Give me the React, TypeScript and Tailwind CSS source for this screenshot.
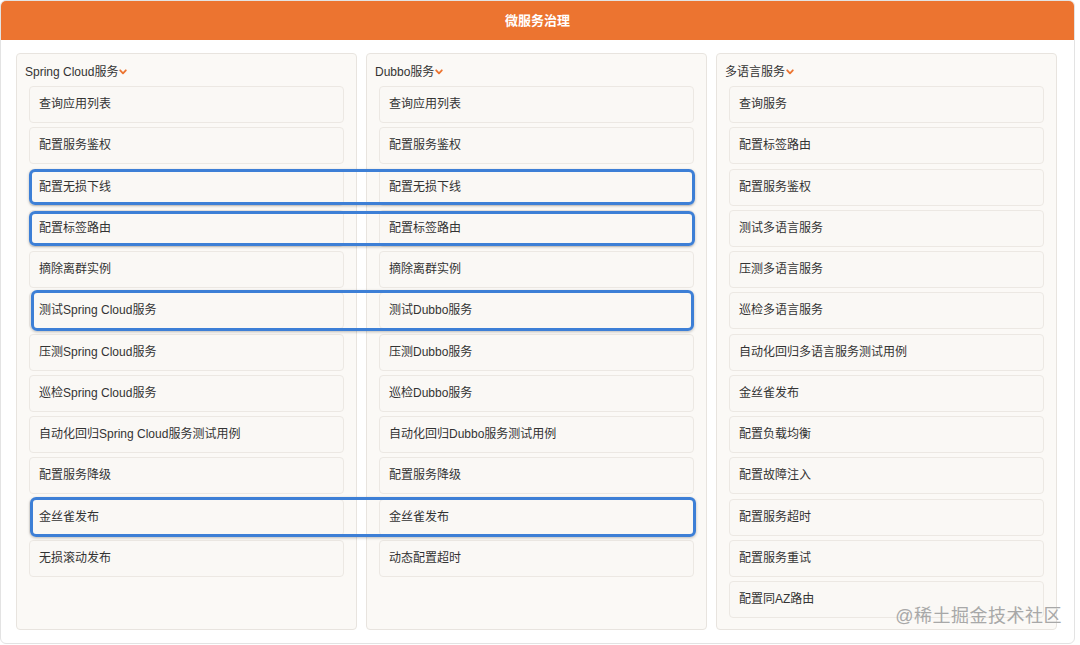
import React from "react";

const FONT = {
  fontFamily: '"Liberation Sans", "Noto Sans CJK SC", sans-serif',
};

const cols: { title: string; items: string[] }[] = [
  {
    title: "Spring Cloud服务",
    items: [
      "查询应用列表",
      "配置服务鉴权",
      "配置无损下线",
      "配置标签路由",
      "摘除离群实例",
      "测试Spring Cloud服务",
      "压测Spring Cloud服务",
      "巡检Spring Cloud服务",
      "自动化回归Spring Cloud服务测试用例",
      "配置服务降级",
      "金丝雀发布",
      "无损滚动发布",
    ],
  },
  {
    title: "Dubbo服务",
    items: [
      "查询应用列表",
      "配置服务鉴权",
      "配置无损下线",
      "配置标签路由",
      "摘除离群实例",
      "测试Dubbo服务",
      "压测Dubbo服务",
      "巡检Dubbo服务",
      "自动化回归Dubbo服务测试用例",
      "配置服务降级",
      "金丝雀发布",
      "动态配置超时",
    ],
  },
  {
    title: "多语言服务",
    items: [
      "查询服务",
      "配置标签路由",
      "配置服务鉴权",
      "测试多语言服务",
      "压测多语言服务",
      "巡检多语言服务",
      "自动化回归多语言服务测试用例",
      "金丝雀发布",
      "配置负载均衡",
      "配置故障注入",
      "配置服务超时",
      "配置服务重试",
      "配置同AZ路由",
    ],
  },
];

function Chevron() {
  return (
    <svg width="8" height="6" viewBox="0 0 8 6" className="ml-[1px]">
      <path
        d="M1.2 1.3 L4 4.3 L6.8 1.3"
        fill="none"
        stroke="#ec7430"
        strokeWidth="1.8"
        strokeLinecap="round"
        strokeLinejoin="round"
      />
    </svg>
  );
}

function Panel({ title, items }: { title: string; items: string[] }) {
  return (
    <div className="w-[341px] h-[577px] border border-[#e8e4df] rounded-[4px] bg-[#fbf9f6] pt-[9px]">
      <div className="flex items-center h-[18px] pl-[8px] text-[12px] text-[#333]">
        <span>{title}</span>
        <Chevron />
      </div>
      <div className="mt-[5px] flex flex-col gap-[4.25px] px-[12px]">
        {items.map((it, i) => (
          <div
            key={i}
            className="h-[37px] border border-[#ece8e3] rounded-[4px] bg-[#faf8f5] flex items-center pl-[9px] pb-[1px] text-[12px] text-[#333]"
          >
            {it}
          </div>
        ))}
      </div>
    </div>
  );
}

const boxes = [
  "left-[29px] top-[169px] w-[666px] h-[36px]",
  "left-[29px] top-[211px] w-[666px] h-[35px]",
  "left-[31px] top-[290px] w-[663px] h-[41px]",
  "left-[30px] top-[497px] w-[666px] h-[40px]",
];

export default function App() {
  return (
    <div className="relative w-[1080px] h-[645px] bg-white" style={FONT}>
      <div className="w-[1075px] h-[644px] border border-[#e3e3e3] rounded-[6px] overflow-hidden">
        <div className="h-[39px] bg-[#ec7430] flex items-center justify-center text-white text-[13px] font-bold">
          微服务治理
        </div>
        <div className="flex gap-[9px] pl-[15px] pt-[13px]">
          {cols.map((c, i) => (
            <Panel key={i} title={c.title} items={c.items} />
          ))}
        </div>
      </div>
      {boxes.map((b, i) => (
        <div
          key={i}
          className={`absolute ${b} border-[3px] border-[#3d7fd6] rounded-[6px] shadow-[0_1px_3px_rgba(0,0,0,0.25)]`}
        />
      ))}
      <div className="absolute right-[18px] top-[603px] text-[18px] text-[#a8a8a8] tracking-[0.5px]">
        @稀土掘金技术社区
      </div>
    </div>
  );
}
